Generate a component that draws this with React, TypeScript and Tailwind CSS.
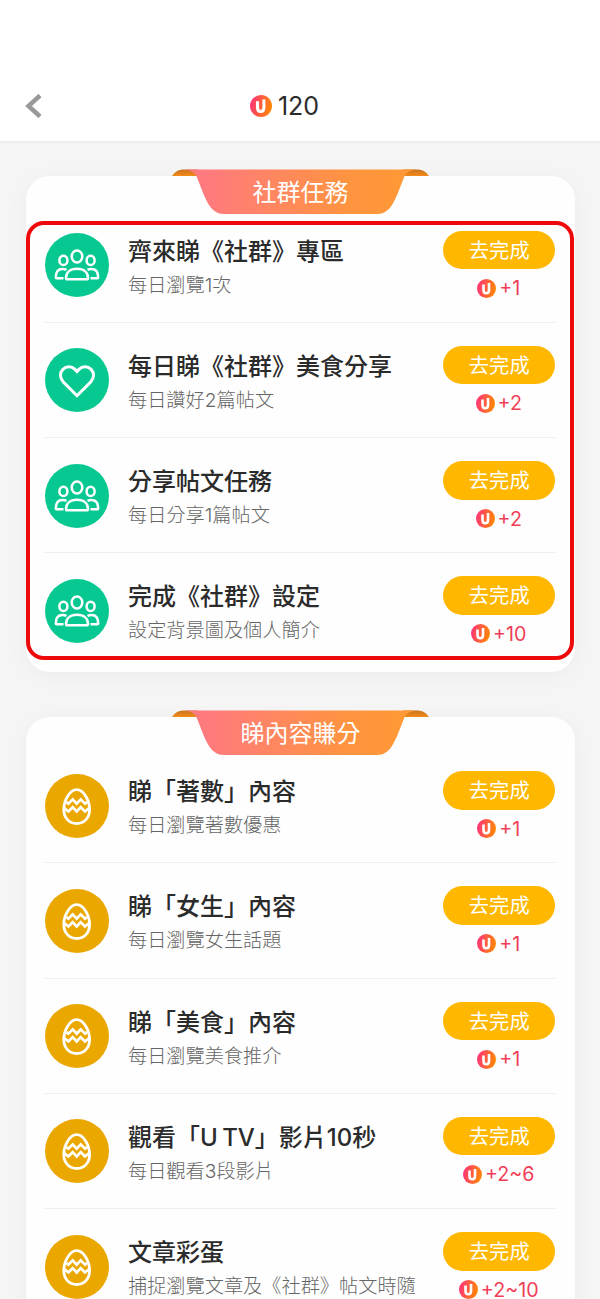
import type { ReactNode } from 'react'

const FONT = 'font-[Inter,"Noto_Sans_CJK_TC",sans-serif]'

type IconName = 'people' | 'heart' | 'egg'
type Task = { title: string; desc: string; points: string; icon: IconName }

const COMMUNITY_TASKS: Task[] = [
  { title: '齊來睇《社群》專區', desc: '每日瀏覽1次', points: '+1', icon: 'people' },
  { title: '每日睇《社群》美食分享', desc: '每日讚好2篇帖文', points: '+2', icon: 'heart' },
  { title: '分享帖文任務', desc: '每日分享1篇帖文', points: '+2', icon: 'people' },
  { title: '完成《社群》設定', desc: '設定背景圖及個人簡介', points: '+10', icon: 'people' },
]

const CONTENT_TASKS: Task[] = [
  { title: '睇「著數」內容', desc: '每日瀏覽著數優惠', points: '+1', icon: 'egg' },
  { title: '睇「女生」內容', desc: '每日瀏覽女生話題', points: '+1', icon: 'egg' },
  { title: '睇「美食」內容', desc: '每日瀏覽美食推介', points: '+1', icon: 'egg' },
  { title: '觀看「U TV」影片10秒', desc: '每日觀看3段影片', points: '+2~6', icon: 'egg' },
  { title: '文章彩蛋', desc: '捕捉瀏覽文章及《社群》帖文時隨', points: '+2~10', icon: 'egg' },
]

const ICONS: Record<IconName, ReactNode> = {
  people: (
    <>
      <ellipse cx="32" cy="23.5" rx="5.3" ry="6" />
      <ellipse cx="18.4" cy="27.4" rx="4" ry="4.6" />
      <ellipse cx="45.6" cy="27.4" rx="4" ry="4.6" />
      <path d="M22.300 46.300h19.400c.8 0 1.300-.5 1.300-1.300 0-5.500-4-9.200-11-9.200s-11 3.700-11 9.200c0 .8.5 1.300 1.300 1.300Z" />
      <path d="M18.500 45.300h-7c-.5 0-.7-.3-.7-.8 0-5 2.200-8.500 6.600-8.500 1.600 0 3 .3 4.100.9" />
      <path d="M45.500 45.300h7c.5 0 .7-.3.7-.8 0-5-2.200-8.500-6.600-8.500-1.600 0-3 .3-4.100.9" />
    </>
  ),
  heart: (
    <path
      strokeWidth="3"
      d="M32 47.700 18.400 34.100c-3.800-4-3.800-9.300-.5-12.700 3.400-3.500 8.700-3.500 12.100 0l2 2.100 2-2.100c3.400-3.500 8.700-3.500 12.100 0 3.300 3.400 3.300 8.700-.5 12.700Z"
    />
  ),
  egg: (
    <>
      <path strokeWidth="2.800" d="M31.700 15.600c7 0 12.900 11 12.900 19.900 0 8.400-5.400 14-12.900 14s-12.900-5.600-12.900-14c0-8.900 5.900-19.900 12.900-19.900Z" />
      <path strokeWidth="2.700" d="m21.500 28 1.900 1.700 4.300-4.300 4 4.300 4-4.300 4.300 4.300 1.900-1.700" />
      <path strokeWidth="2.700" d="m19.500 34.300 3.900 3.200 4.300-4.300 4 4.300 4-4.300 4.300 4.300 3.900-3.200" />
    </>
  ),
}

function TaskIcon({ name }: { name: IconName }) {
  return (
    <div className={`size-16 shrink-0 rounded-full ${name === 'egg' ? 'bg-[#e9a700]' : 'bg-[#08c892]'}`}>
      <svg viewBox="0 0 64 64" className="size-16" fill="none" stroke="#fff" strokeWidth="2.500">
        {ICONS[name]}
      </svg>
    </div>
  )
}

function Coin({ className }: { className: string }) {
  return (
    <svg viewBox="0 0 24 24" className={className}>
      <defs>
        <linearGradient id="coin" x1="0" y1="0.4" x2="1" y2="0.6">
          <stop offset="0" stopColor="#ff3478" />
          <stop offset="1" stopColor="#ff8a00" />
        </linearGradient>
      </defs>
      <circle cx="12" cy="12" r="12" fill="url(#coin)" />
      <path d="M8.200 6.800v6.700c0 3 1.300 4.500 3.500 4.500s3.500-1.500 3.500-4.500V5" fill="none" stroke="#fff" strokeWidth="3.300" />
    </svg>
  )
}

function Ribbon({ title }: { title: string }) {
  return (
    <div className="absolute -top-[7px] left-[146.500px] h-[46px] w-[257px]">
      <svg viewBox="0 0 258 46" className="absolute inset-0 h-[46px] w-[257px]" preserveAspectRatio="none">
        <defs>
          <linearGradient id="ribbon">
            <stop offset="0.1" stopColor="#ff7a7e" />
            <stop offset="0.7" stopColor="#ff9440" />
            <stop offset="1" stopColor="#ff9933" />
          </linearGradient>
          <linearGradient id="fold" x1="0" y1="0" x2="0" y2="1">
            <stop offset="0" stopColor="#c87420" />
            <stop offset="1" stopColor="#f48a18" />
          </linearGradient>
        </defs>
        <path d="M0 7C3 2.500 7 .5 12 .5h14V7ZM258 7c-3-4.500-7-6.500-12-6.500h-14V7Z" fill="url(#fold)" />
        <path
          d="M10 .5h238c-6 0-12 1.500-14.500 6.500-4 9.500-8 22-13 29.500-4 5.500-8 8.500-14.500 8.500H52c-6.500 0-10.500-3-14.500-8.500-5-7.500-9-20-13-29.500C22 2 16 .5 10 .5Z"
          fill="url(#ribbon)"
        />
      </svg>
      <h2 className="relative pt-px text-center text-2xl leading-[46px] text-white">{title}</h2>
    </div>
  )
}

function TaskRow({ task }: { task: Task }) {
  return (
    <li className="flex h-[115.250px] items-start border-b border-[#efefef] last:border-0">
      <div className="pt-[25.500px] pl-[0.750px]">
        <TaskIcon name={task.icon} />
      </div>
      <div className="min-w-0 flex-1 pt-[27px] pl-[19.250px] whitespace-nowrap">
        <h3 className="text-2xl leading-[34px] font-medium text-[#2b2b2b] [word-spacing:-2px]">{task.title}</h3>
        <p className="text-[19.200px] leading-[33px] font-light text-[#666]">{task.desc}</p>
      </div>
      <div className="mr-[0.750px] flex w-28 flex-col items-center pt-[23px]">
        <button className="h-[38.500px] w-28 rounded-full bg-[#ffb700] text-[20.300px] leading-[39px] text-white">去完成</button>
        <div className="mt-[5px] flex h-7 items-center gap-[3px] pr-px text-[19.700px] text-[#f03e56]">
          <Coin className="size-[19px]" />
          <span className="relative top-px">{task.points}</span>
        </div>
      </div>
    </li>
  )
}

function TaskCard({ title, tasks, children }: { title: string; tasks: Task[]; children?: ReactNode }) {
  return (
    <section className="relative rounded-[24px] bg-[#fefefe] px-[18.500px] pt-[31.500px] pb-[3px] shadow-[0_4px_24px_rgba(0,0,0,0.04)]">
      <Ribbon title={title} />
      <ul>
        {tasks.map(t => <TaskRow key={t.title} task={t} />)}
      </ul>
      {children}
    </section>
  )
}

export default function App() {
  return (
    <div className={`h-[1299px] w-[600px] overflow-hidden bg-[#f5f5f5] ${FONT}`}>
      <header className="relative flex h-[141px] items-center justify-center bg-white pt-[71px] shadow-[0_1px_3px_rgba(0,0,0,0.06)]">
        <svg viewBox="0 0 18 24" className="absolute top-[94px] left-[25px] h-6 w-[18px]" fill="none" stroke="#999" strokeWidth="4.500">
          <path d="M15 1.500 3.500 12 15 22.500" />
        </svg>
        <div className="flex items-center gap-1.5 pr-[31px] text-[25px] text-[#2b2b2b]">
          <Coin className="size-[22px]" />
          <span className="relative top-px">120</span>
        </div>
      </header>
      <main className="flex flex-col gap-[45px] px-[25.500px] pt-[35px]">
        <TaskCard title="社群任務" tasks={COMMUNITY_TASKS}>
          {/* highlight frame round the community tasks */}
          <div className="absolute inset-x-[0.500px] top-[45px] h-[439px] rounded-[18px] border-4 border-[#ee0a0a]" />
        </TaskCard>
        <TaskCard title="睇內容賺分" tasks={CONTENT_TASKS} />
      </main>
    </div>
  )
}
